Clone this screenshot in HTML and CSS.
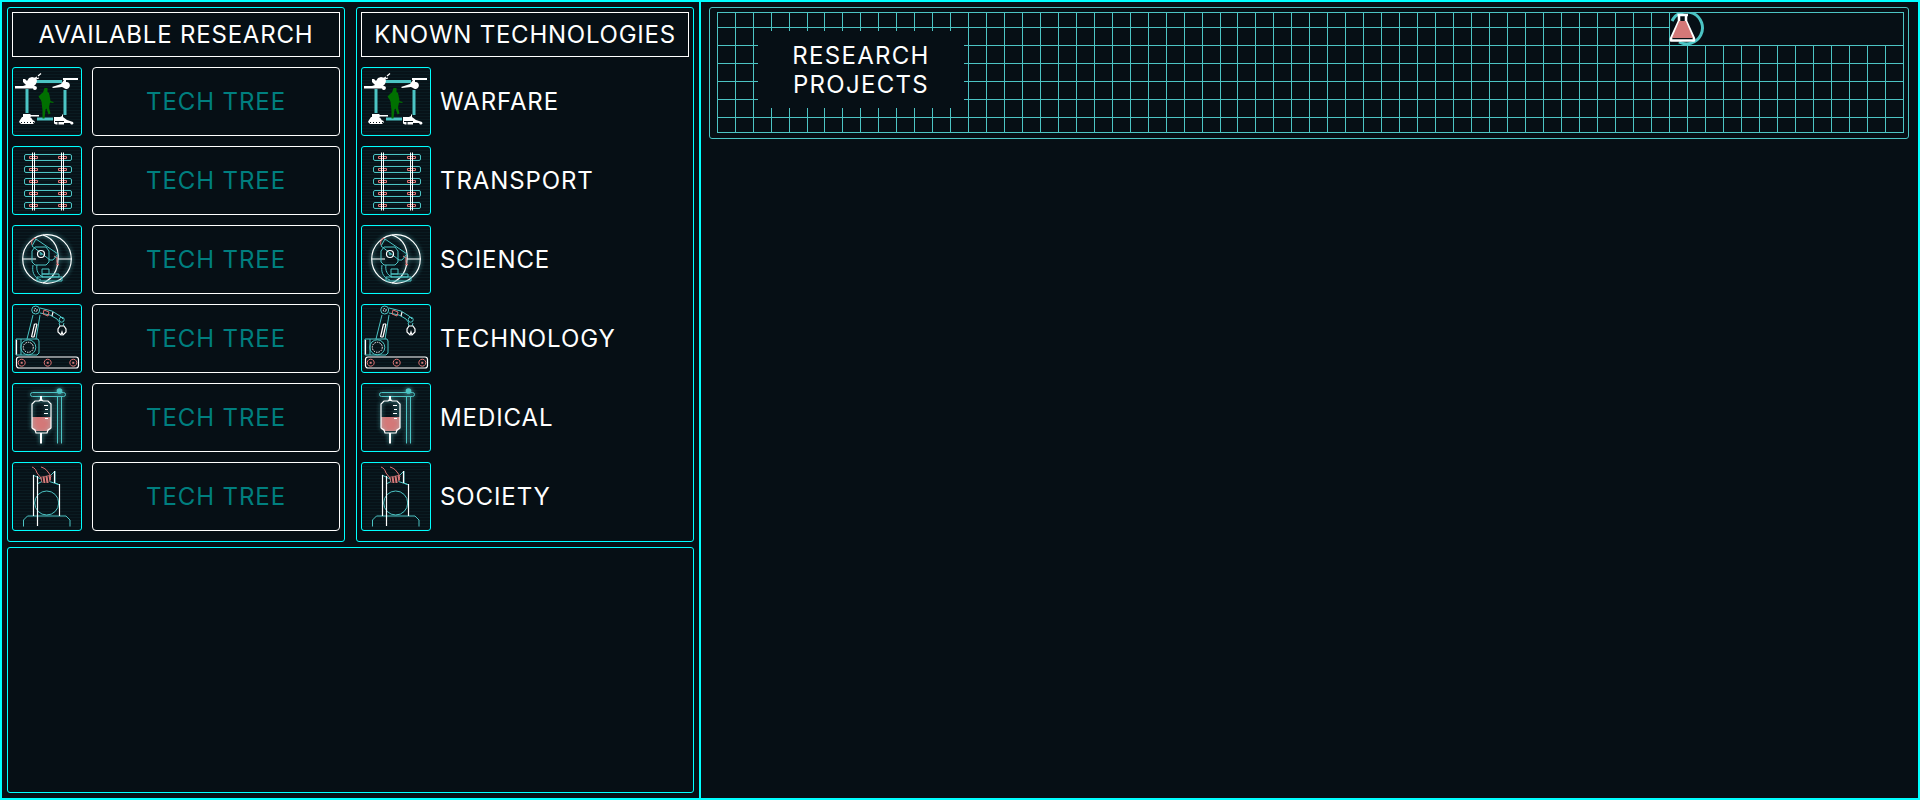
FILE: index.html
```html
<!DOCTYPE html>
<html>
<head>
<title>Research</title>
<link rel="stylesheet" href="styles.css">
</head>
<body>

<svg class="icon-defs">
  <symbol id="warfare" viewBox="1 1 68 67">
    <path class="bar" d="M24 14.500H50M15 22V46M53 23V48M25 52H41"/>
    <path class="green" d="M32.500 21h3v4l1.500 1 1 5 .5 3 3 1v1l-3.500-.5-1 5 1.500 6-2 1-2-6-1 1-1 9h-2v-8l-1-9-1-2-2-3 3-3 1.500-1z"/>
    <path class="white" d="M3 19h8l3-1-2-2-1-1 0-3 2 0 2 2 2-3 3-1 4 1 1 3-1 3-2 2h1a2 2 0 1 1-2 2.500H3z"/>
    <path class="thin" d="M22 12l3-2M26 9l3-2.500M24 12l3-1"/>
    <path class="white" d="M40 20l9-3 3-4h-1V11h15v2H54v2h1a3.500 3.500 0 1 1-3 6l-2-1-9 1z"/>
    <path class="white" d="M11 47h7l1 1h8v1.500h-8l-1 1h1l2 3h1l1 1.500-2 2H9l-2-2 1-2 2-3h1z"/>
    <path class="white" d="M42 53v-3h6l2-1v-1.500h1V50l4 3 6 2 .5 1.500-1 1-1.500 0-1-1.500H52v1.500l-3 0H44l-2-1z"/>
    <path class="cut" d="M9 55.500H24" stroke-dasharray="1 2"/>
    <path class="cut" d="M43 54.500H52M46 55v3"/>
  </symbol>

  <symbol id="transport" viewBox="1 1 68 67">
    <rect class="line" x="12.500" y="8.500" width="47" height="6" rx="1.500"/>
    <rect class="line" x="12.500" y="20.500" width="47" height="6" rx="1.500"/>
    <rect class="line" x="12.500" y="32.500" width="47" height="6" rx="1.500"/>
    <rect class="line" x="12.500" y="44.500" width="47" height="6" rx="1.500"/>
    <rect class="line" x="12.500" y="56.500" width="47" height="6" rx="1.500"/>
    <path class="red-line" d="M17.500 10.500h8v2h-8zM46.500 10.500h8v2h-8zM17.500 22.500h8v2h-8zM46.500 22.500h8v2h-8zM17.500 34.500h8v2h-8zM46.500 34.500h8v2h-8zM17.500 46.500h8v2h-8zM46.500 46.500h8v2h-8zM17.500 58.500h8v2h-8zM46.500 58.500h8v2h-8z"/>
    <path class="rail" d="M20.500 6.500V64.500M22.500 6.500V64.500M49.500 6.500V64.500M51.500 6.500V64.500"/>
  </symbol>

  <symbol id="science" viewBox="1 1 68 67">
    <g class="glow">
      <circle class="thin" cx="35" cy="34" r="24.300"/>
      <path class="thin" d="M11 34H24M46 34H60M31 10C44 14 47 26 46 34C46 44 42 53 31 58"/>
    </g>
    <path class="red-line" d="M20 20c-1-3 0-5 2-7l3 2M42 31l3 2c0 3-1 5 2 7l-3-1"/>
    <path class="line" d="M24 14l22 15-5 6-3 0-18-14zM23 22h11l3 4v11l-3 3H23l-3-3V26zM21 40c-1 6 0 12 8 15M25 40c-1 5 1 10 6 12"/>
    <circle class="thin" cx="29" cy="29" r="3.500"/>
    <circle class="line" cx="29" cy="29" r="1"/>
    <path class="line" d="M30 49h17v3h-17zM25 52h25v4H25zM30 44h7v5h-7z"/>
  </symbol>

  <symbol id="technology" viewBox="1 1 68 67">
    <rect class="thin" x="4.500" y="53" width="62" height="11" rx="2.500"/>
    <path class="red-line" d="M9.700 55.200a3.500 3.500 0 1 0 .01 0zM35.700 55.200a3.500 3.500 0 1 0 .01 0zM61.300 55.200a3.500 3.500 0 1 0 .01 0z"/>
    <path class="red-dot" d="M8.700 57.700h2v2h-2zM34.700 57.700h2v2h-2zM60.300 57.700h2v2h-2z"/>
    <path class="line" d="M4 35h22l1 2v12l-2 2H4zM9 35v16"/>
    <path class="thin" d="M4.500 36v14.500"/>
    <circle class="line" cx="16.300" cy="43.300" r="7.500"/>
    <circle class="dash" cx="16.300" cy="43.300" r="5"/>
    <path class="line" d="M21 11l-6 24M28 11l-4 24"/>
    <path class="thin" d="M22.500 20l-3 13M25 20l-3 13M22.500 20h2.500M19.500 33h2.500"/>
    <circle class="line" cx="23.700" cy="6" r="4"/>
    <circle class="dash" cx="23.700" cy="6" r="1.500"/>
    <path class="line" d="M28 4l12 3 8 5 3 3M28 9l10 2 7 4 3 4"/>
    <path class="red-line" d="M32 6l5 2-1 4-5-2z"/>
    <path class="thin" d="M41 8l-1 4"/>
    <circle class="line" cx="49.700" cy="15.700" r="2.500"/>
    <path class="line" d="M47 19l1 3M52 19l-1 3"/>
    <path class="thin" d="M48 22l-2 3v3l3 3 1-3 1 3 3-3v-3l-2-3z"/>
  </symbol>

  <symbol id="medical" viewBox="1 1 68 67">
    <g class="glow">
      <rect class="line" x="18.500" y="9.500" width="35" height="4" rx="2"/>
      <circle class="fill-teal" cx="47.500" cy="8" r="2.800"/>
      <path class="line" d="M45.500 13.500V60.500M49.500 13.500V60.500"/>
    </g>
    <path class="fill-red" d="M20 34H39V46L36 48H23L20 46z"/>
    <g class="glow">
      <path class="rail" d="M28.500 13V18M29.500 13V18M28.500 50V60.500M29.500 50V60.500"/>
      <path class="thin" d="M27 18l2-2 2 2h5l3 3v24l-3 2-1 3H24l-1-3-3-2V21l3-3z"/>
      <path class="tick" d="M32 22.500h4M33 26.500h3M32 30.500h4M33 35.500h3"/>
    </g>
  </symbol>

  <symbol id="society" viewBox="1 1 68 67">
    <path class="line" d="M11.500 64.500V58l4-4H54l4 4v6.500"/>
    <circle class="line" cx="34.700" cy="41" r="12"/>
    <path class="line" d="M21 13l12 6 10-10v12l5 2M25 22l8-4 6 2 9 3"/>
    <path class="thin" d="M21.500 13V54M25.500 14V64M42.500 9V21M47.500 22V54"/>
    <path class="red-line" d="M20 5c3 1 4 3 5 6l4 5M29 5c3 1 5 2 7 5l3 4-1 3"/>
    <path class="fill-red" d="M28 15l10-2 1 5-3 3-6 0z"/>
    <path class="cut" d="M30 15l1 6M33 14.500l1 6.500M36 14l1 6"/>
  </symbol>
</svg>

<div class="screen">
  <div class="left-side">
    <div class="columns">

      <div class="panel">
        <h2 class="panel-title title-available">AVAILABLE RESEARCH</h2>
        <div class="rows">
          <div class="row">
            <svg class="icon"><use href="#warfare"/></svg>
            <div class="tree-button">TECH TREE</div>
          </div>
          <div class="row">
            <svg class="icon"><use href="#transport"/></svg>
            <div class="tree-button">TECH TREE</div>
          </div>
          <div class="row">
            <svg class="icon"><use href="#science"/></svg>
            <div class="tree-button">TECH TREE</div>
          </div>
          <div class="row">
            <svg class="icon"><use href="#technology"/></svg>
            <div class="tree-button">TECH TREE</div>
          </div>
          <div class="row">
            <svg class="icon"><use href="#medical"/></svg>
            <div class="tree-button">TECH TREE</div>
          </div>
          <div class="row">
            <svg class="icon"><use href="#society"/></svg>
            <div class="tree-button">TECH TREE</div>
          </div>
        </div>
      </div>

      <div class="panel">
        <h2 class="panel-title title-known">KNOWN TECHNOLOGIES</h2>
        <div class="rows">
          <div class="row">
            <svg class="icon"><use href="#warfare"/></svg>
            <div class="tech-name">WARFARE</div>
          </div>
          <div class="row">
            <svg class="icon"><use href="#transport"/></svg>
            <div class="tech-name">TRANSPORT</div>
          </div>
          <div class="row">
            <svg class="icon"><use href="#science"/></svg>
            <div class="tech-name">SCIENCE</div>
          </div>
          <div class="row">
            <svg class="icon"><use href="#technology"/></svg>
            <div class="tech-name">TECHNOLOGY</div>
          </div>
          <div class="row">
            <svg class="icon"><use href="#medical"/></svg>
            <div class="tech-name">MEDICAL</div>
          </div>
          <div class="row">
            <svg class="icon"><use href="#society"/></svg>
            <div class="tech-name">SOCIETY</div>
          </div>
        </div>
      </div>

    </div>
    <div class="panel info-panel"></div>
  </div>

  <div class="right-side">
    <div class="projects">
      <div class="grid-wrap">
        <svg class="grid" width="1187" height="121">
          <path d="M0 .5H1187M0 15.500H1187M0 33.500H1187M0 51.500H1187M0 69.500H1187M0 87.500H1187M0 105.500H1187M0 120.500H1187"/>
          <path d="M.5 0v121
            m18-121v121 m18-121v121 m18-121v121 m18-121v121 m18-121v121
            m17-121v121
            m18-121v121 m18-121v121 m18-121v121 m18-121v121 m18-121v121
            m18-121v121 m18-121v121 m18-121v121 m18-121v121 m18-121v121
            m18-121v121 m18-121v121 m18-121v121 m18-121v121 m18-121v121
            m18-121v121 m18-121v121 m18-121v121 m18-121v121 m18-121v121
            m18-121v121 m18-121v121
            m17-121v121
            m18-121v121 m18-121v121 m18-121v121 m18-121v121 m18-121v121
            m18-121v121 m18-121v121 m18-121v121 m18-121v121 m18-121v121
            m18-121v121 m18-121v121 m18-121v121 m18-121v121 m18-121v121
            m18-121v121 m18-121v121 m18-121v121 m18-121v121 m18-121v121
            m18-121v121 m18-121v121 m18-121v121 m18-121v121 m18-121v121
            m18-121v121 m18-121v121 m18-121v121 m18-121v121 m18-121v121
            m18-121v121 m18-121v121 m18-121v121 m18-121v121 m18-121v121
            m18-121v121"/>
          <path d="M1186.500 0V121"/>
          <rect class="grid-gap" x="953" y="1" width="233" height="32"/>
        </svg>
        <div class="projects-label">RESEARCH<br>PROJECTS</div>
        <svg class="flask" width="36" height="36" viewBox="0 0 36 36">
          <path class="flask-ring" d="M3 9a16 16 0 1 1 7 21"/>
          <path class="flask-body" d="M8.500 3h10.500M10 3v6L2 26.500v2h23v-2L17 9V3z"/>
          <path class="flask-liquid" d="M10.300 9H16.700L24 26H3z"/>
        </svg>
      </div>
    </div>
  </div>
</div>

</body>
</html>
```

FILE: styles.css
```css
* {
  box-sizing: border-box;
}
body {
  margin: 0;
  background-color: #060f15;
  font-family: "Inter", "Liberation Sans", sans-serif;
  color: #ffffff;
}
.icon-defs {
  position: absolute;
  width: 0;
  height: 0;
}
.screen {
  display: flex;
  width: 1920px;
  height: 800px;
  border: 2px solid #00ffff;
  background-color: #060f15;
}
.left-side {
  display: flex;
  flex-direction: column;
  gap: 5px;
  width: 699px;
  padding: 5px;
  border-right: 2px solid #00ffff;
}
.columns {
  display: flex;
  gap: 11px;
}
.panel {
  width: 338px;
  height: 535px;
  padding: 4px;
  border: 1px solid #00ffff;
  border-radius: 3px;
}
.info-panel {
  width: 687px;
  height: 246px;
}
.panel-title {
  display: flex;
  align-items: center;
  justify-content: center;
  height: 45px;
  margin: 0;
  border: 1px solid #ffffff;
  font-size: 24px;
  font-weight: 400;
  white-space: nowrap;
}
.title-available {
  letter-spacing: 0.8px;
}
.title-known {
  letter-spacing: 0.75px;
}
.rows {
  display: flex;
  flex-direction: column;
  gap: 10px;
  margin-top: 10px;
}
.row {
  display: flex;
  gap: 10px;
  height: 69px;
}
.icon {
  flex: none;
  width: 70px;
  height: 69px;
  border: 1px solid #00ffff;
  border-radius: 3px;
  background: repeating-linear-gradient(0deg, #0a1b21 0, #0a1b21 1px, #071218 1px, #071218 3px);
}
.tree-button {
  display: flex;
  flex: 1;
  align-items: center;
  justify-content: center;
  border: 1px solid #ffffff;
  border-radius: 4px;
  color: #007f7f;
  font-size: 24px;
  letter-spacing: 0.9px;
}
.tech-name {
  align-self: center;
  margin-left: -1px;
  font-size: 24px;
  letter-spacing: 0.9px;
}

/* icon strokes */
.line, .thin, .rail, .red-line, .tick, .dash, .bar, .cut {
  fill: none;
}
.line {
  stroke: #4cc4c4;
  stroke-width: 1;
}
.thin {
  stroke: #ffffff;
  stroke-width: 1.200;
}
.rail {
  stroke: #ffffff;
  stroke-width: 1;
}
.tick {
  stroke: #ffffff;
  stroke-width: 1;
}
.dash {
  stroke: #ffffff;
  stroke-width: 1;
  stroke-dasharray: 1.5 1;
}
.red-line {
  stroke: #e07575;
  stroke-width: 1;
}
.red-dot, .fill-red {
  fill: #d47878;
}
.fill-teal {
  fill: #4cc4c4;
}
.bar {
  stroke: #4cc4c4;
  stroke-width: 3;
}
.white {
  fill: #ffffff;
}
.green {
  fill: #007000;
}
.cut {
  stroke: #071218;
  stroke-width: 1;
}
.glow {
  filter: drop-shadow(0 0 2px rgba(120, 255, 255, 0.7));
}

.right-side {
  flex: 1;
  padding: 5px 9px 5px 8px;
}
.projects {
  height: 132px;
  padding: 4px 4px 4px 7px;
  border: 1px solid #4cc4c4;
  border-radius: 3px;
}
.grid-wrap {
  position: relative;
  height: 121px;
}
.grid {
  display: block;
}
.grid path {
  fill: none;
  stroke: #4cc4c4;
  stroke-width: 1;
  shape-rendering: crispEdges;
}
.grid-gap {
  fill: #060f15;
}
.projects-label {
  position: absolute;
  left: 41px;
  top: 19px;
  display: flex;
  align-items: center;
  justify-content: center;
  width: 206px;
  height: 77px;
  background-color: #060f15;
  font-size: 24px;
  line-height: 29px;
  letter-spacing: 1.3px;
  text-align: center;
}
.flask {
  position: absolute;
  left: 952px;
  top: 0;
}
.flask-ring {
  fill: none;
  stroke: #4cc4c4;
  stroke-width: 3;
}
.flask-body {
  fill: #060f15;
  stroke: #ffffff;
  stroke-width: 2.500;
  stroke-linejoin: round;
}
.flask-liquid {
  fill: #d47878;
}
```
